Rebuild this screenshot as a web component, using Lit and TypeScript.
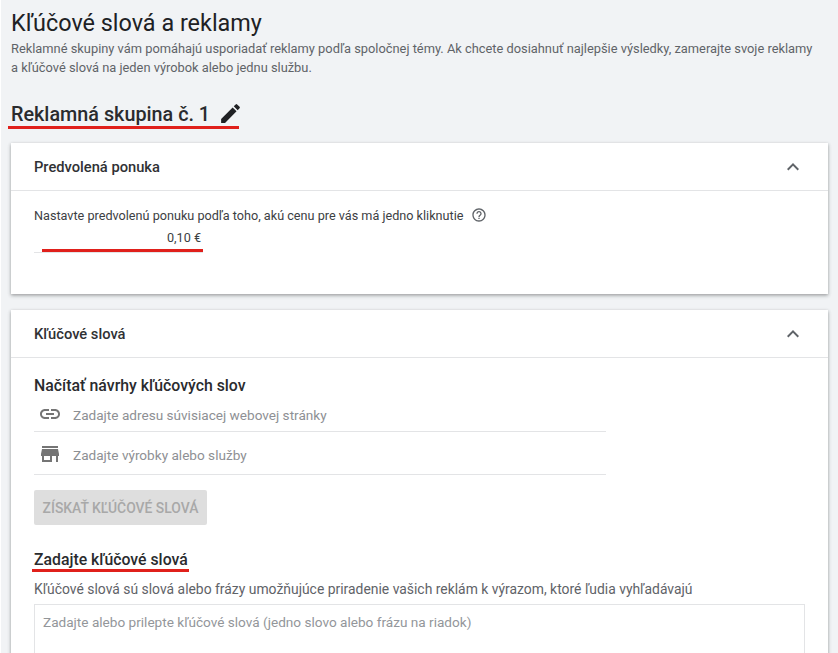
import { LitElement, html, css } from "lit";
import { customElement } from "lit/decorators.js";

const chevron = html`<svg class="chev" viewBox="0 0 24 24" width="24" height="24"><path d="M12 8l-6 6 1.41 1.41L12 10.83l4.59 4.58L18 14z" fill="#5f6368"/></svg>`;

@customElement("app-root")
export class AppRoot extends LitElement {
  static styles = css`
    :host { display: block; height: 653px; overflow: hidden; background: #f1f3f5; border-left: 1px solid #fff; font-family: Roboto, "Noto Sans", sans-serif; color: #202124; box-sizing: border-box; }
    .page { padding: 7px 10px 0 10px; display: flex; flex-direction: column; }
    h1 { margin: 0; font-size: 23.4px; font-weight: 400; line-height: 32px; }
    .intro { margin: 0; font-size: 12.85px; line-height: 19px; color: #5f6368; width: 815px; }
    .group { position: relative; display: flex; align-items: center; gap: 8px; margin-top: 21px; height: 32px; font-size: 19.8px; font-weight: 500; color: #2a2b2e; }
    .group svg { margin-top: -2px; }
    .mark { position: absolute; height: 3px; background: #e0201b; }
    .m1 { left: -3px; top: 28px; width: 231px; }
    .card { background: #fff; box-shadow: 0 1px 3px rgba(60,64,67,.35), 0 2px 4px rgba(60,64,67,.2); display: flex; flex-direction: column; }
    .card.first { margin-top: 13px; height: 151px; }
    .card.second { margin-top: 16px; flex: 1; }
    .head { height: 47px; border-bottom: 1px solid #e3e4e6; display: flex; align-items: center; justify-content: space-between; padding: 0 23px; font-size: 14.7px; font-weight: 500; color: #303134; }
    .chev { display: block; }
    .body { padding: 0 23px; display: flex; flex-direction: column; }
    .hint { display: flex; align-items: center; gap: 8px; margin-top: 15px; height: 18px; font-size: 12.65px; color: #3c4043; }
    .bid { position: relative; width: 169px; height: 26px; margin-top: 3px; border-bottom: 1px solid #e3e4e6; box-sizing: border-box; font-size: 12.65px; color: #3c4043; text-align: right; padding: 2px 2px 0 0; line-height: 18px; }
    .m2 { left: 8px; bottom: 0; width: 161px; }
    h2 { margin: 18px 0 0; font-size: 15.85px; line-height: 20px; font-weight: 500; color: #2a2b2e; }
    .row { width: 572px; border-bottom: 1px solid #e3e4e6; display: flex; align-items: center; gap: 11px; padding-left: 4px; padding-top: 4px; box-sizing: border-box; font-size: 13.6px; color: #8e9094; }
    .row svg { flex: none; margin-top: -2px; }
    .row.a { height: 36px; padding-top: 3px; }
    .row.b { height: 43px; }
    button { all: unset; display: block; width: 173px; height: 35px; margin-top: 15px; background: #dedede; border-radius: 2px; text-align: center; line-height: 36px; font-size: 13.9px; font-weight: 500; color: #a8a8a8; }
    .kw { position: relative; align-self: flex-start; margin-top: 25px; font-size: 15.8px; font-weight: 500; line-height: 20px; color: #2a2b2e; }
    .m3 { left: -2px; top: 19px; width: 157px; }
    .desc { margin: 9px 0 0; font-size: 13.9px; line-height: 20px; color: #5f6368; }
    .area { margin-top: 5px; height: 80px; border: 1px solid #e3e4e6; padding: 7px 8px; box-sizing: border-box; font-size: 13.6px; line-height: 20px; color: #93969a; }
  `;

  render() {
    return html`<div class="page">
      <h1>Kľúčové slová a reklamy</h1>
      <p class="intro">Reklamné skupiny vám pomáhajú usporiadať reklamy podľa spoločnej témy. Ak chcete dosiahnuť najlepšie výsledky, zamerajte svoje reklamy<br>a kľúčové slová na jeden výrobok alebo jednu službu.</p>
      <div class="group">
        <span>Reklamná skupina č. 1</span>
        <svg viewBox="0 0 24 24" width="25" height="25"><path d="M3 17.25V21h3.75L17.81 9.94l-3.75-3.75L3 17.25zM20.71 7.04a1 1 0 0 0 0-1.41l-2.34-2.34a1 1 0 0 0-1.41 0l-1.83 1.83 3.75 3.75 1.83-1.83z" fill="#202124"/></svg>
        <div class="mark m1"></div>
      </div>
      <section class="card first">
        <div class="head"><span>Predvolená ponuka</span>${chevron}</div>
        <div class="body">
          <div class="hint"><span>Nastavte predvolenú ponuku podľa toho, akú cenu pre vás má jedno kliknutie</span>
            <svg viewBox="0 0 24 24" width="16" height="16"><path d="M11 18h2v-2h-2v2zm1-16C6.48 2 2 6.48 2 12s4.48 10 10 10 10-4.48 10-10S17.52 2 12 2zm0 18c-4.41 0-8-3.59-8-8s3.59-8 8-8 8 3.59 8 8-3.59 8-8 8zm0-14c-2.21 0-4 1.79-4 4h2c0-1.1.9-2 2-2s2 .9 2 2c0 2-3 1.75-3 5h2c0-2.25 3-2.5 3-5 0-2.21-1.79-4-4-4z" fill="#5f6368"/></svg>
          </div>
          <div class="bid">0,10 €<div class="mark m2"></div></div>
        </div>
      </section>
      <section class="card second">
        <div class="head"><span>Kľúčové slová</span>${chevron}</div>
        <div class="body">
          <h2>Načítať návrhy kľúčových slov</h2>
          <div class="row a">
            <svg viewBox="0 0 24 24" width="24" height="24"><path d="M3.9 12c0-1.71 1.39-3.1 3.1-3.1h4V7H7c-2.76 0-5 2.24-5 5s2.24 5 5 5h4v-1.9H7c-1.71 0-3.1-1.39-3.1-3.1zM8 13h8v-2H8v2zm9-6h-4v1.9h4c1.71 0 3.1 1.39 3.1 3.1s-1.39 3.1-3.1 3.1h-4V17h4c2.76 0 5-2.24 5-5s-2.24-5-5-5z" fill="#757575"/></svg>
            <span>Zadajte adresu súvisiacej webovej stránky</span>
          </div>
          <div class="row b">
            <svg viewBox="0 0 24 24" width="24" height="24"><path d="M20 4H4v2h16V4zm1 10v-2l-1-5H4l-1 5v2h1v6h10v-6h4v6h2v-6h1zm-9 4H6v-4h6v4z" fill="#757575"/></svg>
            <span>Zadajte výrobky alebo služby</span>
          </div>
          <button>ZÍSKAŤ KĽÚČOVÉ SLOVÁ</button>
          <div class="kw">Zadajte kľúčové slová<div class="mark m3"></div></div>
          <p class="desc">Kľúčové slová sú slová alebo frázy umožňujúce priradenie vašich reklám k výrazom, ktoré ľudia vyhľadávajú</p>
          <div class="area">Zadajte alebo prilepte kľúčové slová (jedno slovo alebo frázu na riadok)</div>
        </div>
      </section>
    </div>`;
  }
}
